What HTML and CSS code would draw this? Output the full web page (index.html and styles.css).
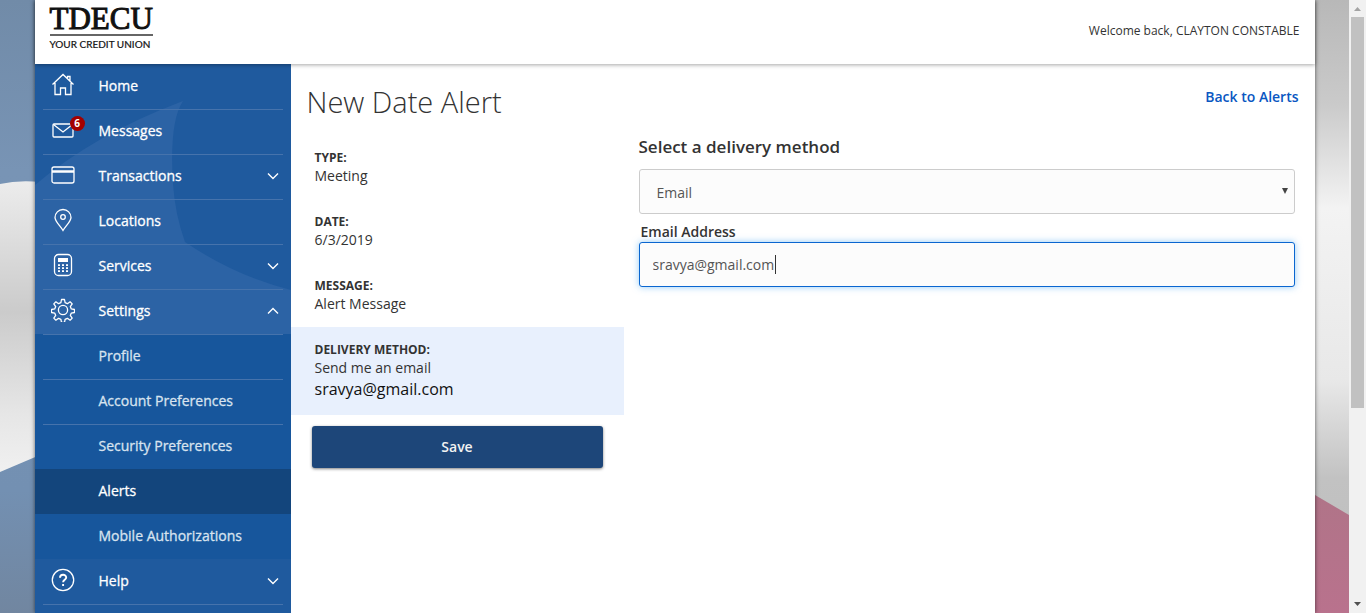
FILE: index.html
```html
<!DOCTYPE html>
<html lang="en">
<head>
<meta charset="utf-8">
<title>New Date Alert</title>
<link rel="stylesheet" href="styles.css">
</head>
<body>
<div class="scene">
  <svg class="backdrop" viewBox="0 0 1349 613" preserveAspectRatio="none" aria-hidden="true">
    <defs>
      <linearGradient id="sky" x1="0" y1="0" x2="0" y2="1"><stop offset="0" stop-color="#718ba8"/><stop offset=".28" stop-color="#7894b5"/><stop offset=".8" stop-color="#7390b2"/><stop offset="1" stop-color="#7186a0"/></linearGradient>
      <linearGradient id="fold" x1="0" y1="0" x2="0" y2="1"><stop offset="0" stop-color="#ececec"/><stop offset=".45" stop-color="#cbcbcb"/><stop offset=".8" stop-color="#e6e6e6"/><stop offset="1" stop-color="#f0f0f0"/></linearGradient>
      <linearGradient id="cloth" x1="0" y1="0" x2="0" y2="1"><stop offset="0" stop-color="#b8b8b8"/><stop offset=".17" stop-color="#cacaca"/><stop offset=".34" stop-color="#f3f3f3"/><stop offset=".62" stop-color="#e8e8e8"/><stop offset=".78" stop-color="#c2c2c2"/><stop offset="1" stop-color="#bcbcbc"/></linearGradient>
      <linearGradient id="rose" x1="0" y1="0" x2="0" y2="1"><stop offset="0" stop-color="#b07488"/><stop offset="1" stop-color="#b9728d"/></linearGradient>
    </defs>
    <rect width="674" height="613" fill="url(#sky)"/>
    <path d="M0 184Q18 180 40 182V455L0 472Z" fill="url(#fold)"/>
    <rect x="674" width="675" height="613" fill="url(#cloth)"/>
    <path d="M1315 495L1349 515V613H1315Z" fill="url(#rose)"/>
  </svg>
  <div class="page">
    <header class="topbar">
      <a class="brand" href="#" aria-label="TDECU Your Credit Union">
        <span class="brand-name">TDECU</span>
        <span class="brand-tag">YOUR CREDIT UNION</span>
      </a>
      <span class="welcome">Welcome back, CLAYTON CONSTABLE</span>
    </header>
    <div class="columns">
      <nav class="sidebar" aria-label="Main">
        <svg class="swoosh" viewBox="0 0 256 549" aria-hidden="true">
          <path d="M0 121Q60 70 148 37Q134 58 138 120Q140 150 150 178Q200 212 256 226V549H0Z" fill="#2c63a5"/>
          <path d="M0 480H256V549H0Z" fill="#1f5a9e"/>
        </svg>
        <ul class="menu">
          <li><a class="row" href="#"><svg class="icon" viewBox="0 0 24 24"><path d="M1.500 11.500L12 1.500L22.500 11.500M4 10v11.500h5.500v-6.500h5v6.500H20V10M16.500 5V3.500H19V8"/></svg>Home</a></li>
          <li><a class="row" href="#"><span class="icon-wrap"><svg class="icon" viewBox="0 0 24 24"><rect x="2" y="6" width="20" height="13" rx="1"/><path d="M2.500 6.500L12 14L21.500 6.500"/></svg><span class="badge">6</span></span>Messages</a></li>
          <li><a class="row" href="#"><svg class="icon" viewBox="0 0 24 24"><rect x="1" y="4" width="22" height="16" rx="2"/><path d="M1 8.500h22" stroke-width="2.500"/></svg>Transactions<svg class="chevron" viewBox="0 0 12 8"><path d="M1 1.500l5 5 5-5"/></svg></a></li>
          <li><a class="row" href="#"><svg class="icon" viewBox="0 0 24 24"><path d="M12 22.500C9 17.500 4 13.500 4 9.500a8 8 0 0 1 16 0c0 4-5 8-8 13z"/><circle cx="12" cy="9" r="2.300"/></svg>Locations</a></li>
          <li><a class="row" href="#"><svg class="icon" viewBox="0 0 24 24"><rect x="3.500" y="1.500" width="17" height="21" rx="4"/><rect x="7" y="5" width="10" height="4" fill="#fff" stroke="none"/><path d="M7 12.200h10M7 15.200h10M7 18.200h10" stroke-width="1.700" stroke-dasharray="2 2"/></svg>Services<svg class="chevron" viewBox="0 0 12 8"><path d="M1 1.500l5 5 5-5"/></svg></a></li>
          <li>
            <a class="row" href="#" aria-expanded="true"><svg class="icon" viewBox="0 0 24 24"><circle cx="12" cy="12" r="4.600"/><path d="M10.500 1.500h3l.6 3.200 2.300 1 2.700-1.900 2.100 2.100-1.900 2.700 1 2.300 3.200.6v3l-3.200.6-1 2.300 1.900 2.700-2.100 2.100-2.700-1.900-2.300 1-.6 3.200h-3l-.6-3.200-2.300-1-2.700 1.900-2.100-2.100 1.900-2.700-1-2.300-3.200-.6v-3l3.200-.6 1-2.300-1.900-2.700 2.100-2.100 2.700 1.900 2.300-1z" stroke-linejoin="round"/></svg>Settings<svg class="chevron" viewBox="0 0 12 8"><path d="M1 6.500l5-5 5 5"/></svg></a>
            <ul class="submenu">
              <li><a class="row" href="#">Profile</a></li>
              <li><a class="row" href="#">Account Preferences</a></li>
              <li><a class="row" href="#">Security Preferences</a></li>
              <li class="current"><a class="row" href="#" aria-current="page">Alerts</a></li>
              <li><a class="row" href="#">Mobile Authorizations</a></li>
            </ul>
          </li>
          <li class="help"><a class="row" href="#"><svg class="icon" viewBox="0 0 24 24"><circle cx="12" cy="12" r="10.700"/><path d="M9 9.800c0-4 6.200-3.900 6.200-.4 0 2.200-3.100 2.400-3.100 4.800M12.100 16v2" stroke-width="1.900"/></svg>Help<svg class="chevron" viewBox="0 0 12 8"><path d="M1 1.500l5 5 5-5"/></svg></a></li>
        </ul>
      </nav>
      <main class="content">
        <div class="heading">
          <h1>New Date Alert</h1>
          <a class="back" href="#">Back to Alerts</a>
        </div>
        <div class="panes">
          <section class="summary">
            <dl>
              <div class="fact"><dt>TYPE:</dt><dd>Meeting</dd></div>
              <div class="fact"><dt>DATE:</dt><dd>6/3/2019</dd></div>
              <div class="fact"><dt>MESSAGE:</dt><dd>Alert Message</dd></div>
              <div class="fact selected"><dt>DELIVERY METHOD:</dt><dd>Send me an email</dd><dd class="address">sravya@gmail.com</dd></div>
            </dl>
            <button class="save" type="button">Save</button>
          </section>
          <form class="delivery">
            <label class="title" for="method">Select a delivery method</label>
            <div class="field">
              <select id="method"><option>Email</option></select>
              <svg class="arrow" viewBox="0 0 6 6" aria-hidden="true"><path d="M0 0h6L3 6z"/></svg>
            </div>
            <label class="label" for="email">Email Address</label>
            <div class="field">
              <input id="email" type="email" value="sravya@gmail.com">
              <span class="caret"></span>
            </div>
          </form>
        </div>
      </main>
    </div>
  </div>
</div>
<div class="scrollbar" aria-hidden="true">
  <svg class="scroll-arrow" viewBox="0 0 17 17"><path d="M5 11h7L8.500 7z" fill="#a3a3a3"/></svg>
  <div class="track"><div class="thumb"></div></div>
  <svg class="scroll-arrow" viewBox="0 0 17 17"><path d="M5 6h7L8.500 10z" fill="#505050"/></svg>
</div>
</body>
</html>
```
FILE: styles.css
```css
* { box-sizing: border-box; }
body {
  margin: 0;
  display: flex;
  min-height: 100vh;
  font-family: "Open Sans", "Noto Sans", sans-serif;
  font-size: 14px;
  color: #333;
}
a { text-decoration: none; }
ul, dl, dd { margin: 0; padding: 0; list-style: none; }

.scene { position: relative; flex: 1; display: flex; justify-content: center; }
.backdrop { position: absolute; inset: 0; width: 100%; height: 100%; }
.page {
  position: relative;
  flex: 1;
  max-width: 1280px;
  display: flex;
  flex-direction: column;
  background: #fff;
  box-shadow: 0 0 4px rgba(0, 0, 0, .6);
}

.topbar {
  position: relative;
  z-index: 1;
  height: 64px;
  padding: 0 15px;
  display: flex;
  justify-content: space-between;
  background: #fff;
  box-shadow: 0 1px 4px rgba(0, 0, 0, .35);
}
.brand { display: flex; flex-direction: column; color: #111; white-space: nowrap; }
.brand-name {
  padding-top: 4px;
  border-bottom: 2px solid #666;
  font: 31px/30px "Liberation Serif", serif;
  -webkit-text-stroke: 1px #111;
}
.brand-tag { font: 10px/16px Lato, sans-serif; -webkit-text-stroke: 0.2px #111; }
.welcome { font-size: 12px; line-height: 61px; }

.columns { flex: 1; display: flex; }
.sidebar { position: relative; overflow: hidden; width: 256px; background: #1f5a9e; }
.swoosh { position: absolute; left: 0; top: 0; width: 256px; }
.menu { position: relative; }
.row {
  display: flex;
  align-items: center;
  height: 45px;
  margin: 0 8px;
  padding: 0 0 4px 8px;
  border-top: 1px solid #4673ac;
  color: #fff;
  font-size: 14px;
  -webkit-text-stroke: 0.3px currentColor;
}
.menu > li:first-child .row, .help .row, .current .row, .current + li .row { border-top-color: transparent; }
.icon { width: 24px; height: 24px; margin-right: 24px; fill: none; stroke: #fff; stroke-width: 1.3; }
.icon-wrap { position: relative; display: flex; }
.badge {
  position: absolute;
  left: 19px;
  top: -2px;
  width: 15px;
  height: 15px;
  border-radius: 50%;
  background: #a30000;
  font-size: 10px;
  line-height: 15px;
  font-weight: 700;
  text-align: center;
  -webkit-text-stroke: 0;
}
.chevron { width: 12px; height: 8px; margin: 2px 4px 0 auto; fill: none; stroke: #fff; stroke-width: 1.4; }
.submenu { background: #17569c; }
.submenu .row { padding-left: 56px; color: #d8e3ef; }
.submenu .current { background: #13457c; }
.submenu .current .row { color: #fff; }
.help::after { content: ""; display: block; margin: 0 8px; border-top: 1px solid #4673ac; }

.content { flex: 1; }
.heading { display: flex; justify-content: space-between; padding: 16px 16px 0; }
h1 { margin: 0; font-weight: 300; font-size: 29px; line-height: 44px; }
.back { color: #0a57c2; font-weight: 600; line-height: 34px; }
.panes { display: flex; gap: 15px; padding: 11px 20px 0 0; }
.summary { flex: 0 0 333px; }
.fact { height: 64px; padding: 14px 23px 0 24px; }
.fact dt { font-weight: 700; font-size: 12px; line-height: 18px; }
.fact dd { line-height: 18px; }
.fact.selected { height: 88px; background: #e8f0fd; }
.fact .address { color: #111; font-size: 16px; line-height: 24px; }
.save {
  display: block;
  width: 291px;
  height: 42px;
  margin: 11px 0 0 21px;
  padding-bottom: 3px;
  border: 0;
  border-radius: 3px;
  background: #1d4679;
  box-shadow: 0 1px 3px rgba(0, 0, 0, .5);
  color: #f2f2f2;
  font: 600 14px "Open Sans", sans-serif;
}
.delivery { flex: 1; display: flex; flex-direction: column; }
.title { font-weight: 600; font-size: 17px; line-height: 24px; margin-bottom: 10px; }
.label { font-weight: 600; line-height: 18px; margin: 9px 0 1px 2px; }
.field { position: relative; display: flex; }
select, input {
  flex: 1;
  height: 45px;
  border: 1px solid #ccc;
  border-radius: 3px;
  background: #fcfcfc;
  color: #555;
  font: 14px "Open Sans", sans-serif;
  outline: 0;
}
select { appearance: none; padding: 1px 17px 0; }
input { padding: 0 13px; border-color: #0a66d0; box-shadow: 0 0 7px rgba(60, 160, 240, .55); }
.arrow { position: absolute; right: 7px; top: 19px; width: 6px; height: 6px; fill: #444; }
.caret { position: absolute; left: 136px; top: 13px; width: 1px; height: 19px; background: #333; }

.scrollbar { width: 17px; display: flex; flex-direction: column; background: #f1f1f1; }
.scroll-arrow { width: 17px; height: 17px; }
.track { flex: 1; padding: 0 2px; }
.thumb { height: 67.500%; background: #c1c1c1; }
```
